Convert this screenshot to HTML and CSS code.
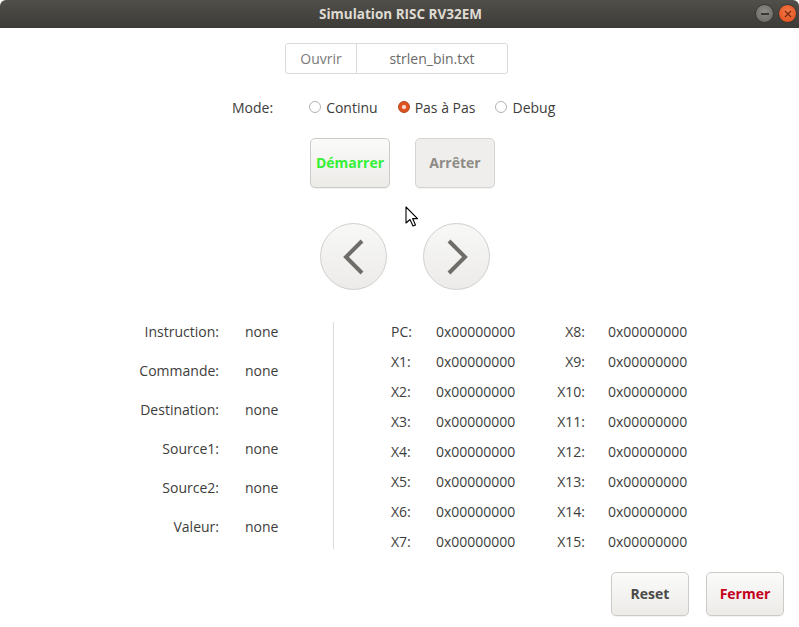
FILE: index.html
```html
<!DOCTYPE html>
<html lang="fr">
<head>
<meta charset="utf-8">
<title>Simulation RISC RV32EM</title>
<link rel="stylesheet" href="styles.css">
</head>
<body>
<div class="window">
  <div class="titlebar">
    <span class="title">Simulation RISC RV32EM</span>
    <div class="controls">
      <span class="ctl min"><span class="dash"></span></span>
      <span class="ctl close">
        <svg width="8" height="8" viewBox="0 0 8 8"><path d="M1 1L7 7M7 1L1 7" stroke="#7a2a10" stroke-width="1.4"/></svg>
      </span>
    </div>
  </div>

  <div class="content">
    <div class="row file-row">
      <div class="chooser">
        <span class="open">Ouvrir</span>
        <span class="fname">strlen_bin.txt</span>
      </div>
    </div>

    <div class="row mode-row">
      <span class="mode-label">Mode:</span>
      <label class="radio"><span class="dot"></span>Continu</label>
      <label class="radio"><span class="dot on"></span>Pas à Pas</label>
      <label class="radio"><span class="dot"></span>Debug</label>
    </div>

    <div class="row action-row">
      <button class="btn start">Démarrer</button>
      <button class="btn stop">Arrêter</button>
    </div>

    <div class="row nav-row">
      <button class="circ">
        <svg width="24" height="36" viewBox="0 0 24 36"><path d="M20 2L4 18L20 34" fill="none" stroke="#6f6d6a" stroke-width="4" stroke-linejoin="miter"/></svg>
      </button>
      <button class="circ">
        <svg width="24" height="36" viewBox="0 0 24 36"><path d="M4 2L20 18L4 34" fill="none" stroke="#6f6d6a" stroke-width="4" stroke-linejoin="miter"/></svg>
      </button>
    </div>

    <div class="info">
      <div class="fields">
        <div class="field"><span class="flabel">Instruction:</span><span class="fval">none</span></div>
        <div class="field"><span class="flabel">Commande:</span><span class="fval">none</span></div>
        <div class="field"><span class="flabel">Destination:</span><span class="fval">none</span></div>
        <div class="field"><span class="flabel">Source1:</span><span class="fval">none</span></div>
        <div class="field"><span class="flabel">Source2:</span><span class="fval">none</span></div>
        <div class="field"><span class="flabel">Valeur:</span><span class="fval">none</span></div>
      </div>
      <div class="sep"></div>
      <div class="regs">
        <span class="r1">PC:</span><span class="v1">0x00000000</span><span class="r2">X8:</span><span class="v2">0x00000000</span>
        <span class="r1">X1:</span><span class="v1">0x00000000</span><span class="r2">X9:</span><span class="v2">0x00000000</span>
        <span class="r1">X2:</span><span class="v1">0x00000000</span><span class="r2">X10:</span><span class="v2">0x00000000</span>
        <span class="r1">X3:</span><span class="v1">0x00000000</span><span class="r2">X11:</span><span class="v2">0x00000000</span>
        <span class="r1">X4:</span><span class="v1">0x00000000</span><span class="r2">X12:</span><span class="v2">0x00000000</span>
        <span class="r1">X5:</span><span class="v1">0x00000000</span><span class="r2">X13:</span><span class="v2">0x00000000</span>
        <span class="r1">X6:</span><span class="v1">0x00000000</span><span class="r2">X14:</span><span class="v2">0x00000000</span>
        <span class="r1">X7:</span><span class="v1">0x00000000</span><span class="r2">X15:</span><span class="v2">0x00000000</span>
      </div>
    </div>

    <div class="row bottom-row">
      <button class="btn small reset">Reset</button>
      <button class="btn small quit">Fermer</button>
    </div>
  </div>

  <svg class="cursor" width="14" height="22" viewBox="0 0 14 22"><path d="M1 1L1 17L5 13.5L8 20L10.5 19L7.6 12.6L12.5 12.6Z" fill="#fff" stroke="#000" stroke-width="1.1" stroke-linejoin="round"/></svg>
</div>
</body>
</html>
```

FILE: styles.css
```css
* { box-sizing: border-box; }
html, body { margin: 0; padding: 0; }
body {
  width: 799px;
  height: 627px;
  overflow: hidden;
  background: #ffffff;
  font-family: "Open Sans", "Noto Sans", sans-serif;
  font-size: 14px;
  color: #3d3d3b;
}
.window { position: relative; width: 799px; height: 627px; background: #ffffff; }

.titlebar {
  height: 28px;
  background: linear-gradient(#504f4a, #3c3b37);
  border-radius: 6px 6px 0 0;
  display: flex;
  align-items: center;
  justify-content: center;
  position: relative;
}
.title {
  color: #dfdbd2;
  font-weight: 700;
  font-size: 13.5px;
  padding-left: 2px;
}
.controls {
  position: absolute;
  right: 2px;
  top: 4px;
  display: flex;
  gap: 4px;
}
.ctl {
  width: 19px; height: 19px; border-radius: 50%;
  display: flex; align-items: center; justify-content: center;
}
.ctl.min { background: radial-gradient(circle at 50% 40%, #8e8d88, #65645f); border: 1px solid #3a3935; }
.ctl.min .dash { width: 8px; height: 2px; background: #3b3a36; }
.ctl.close { background: radial-gradient(circle at 50% 40%, #f47a4a, #dd4a16); border: 1px solid #3a3935; }

.content { display: flex; flex-direction: column; }
.row { display: flex; align-items: center; }

.file-row { padding: 15px 0 0 285px; }
.chooser {
  display: flex;
  height: 31px;
  border: 1px solid #dcdad6;
  border-radius: 3px;
  background: #fff;
}
.chooser span { display: flex; align-items: center; justify-content: center; color: #7a7a78; }
.chooser .open { width: 71px; border-right: 1px solid #dcdad6; }
.chooser .fname { width: 150px; color: #6a6a68; }

.mode-row { padding: 21px 0 0 232px; height: 45px; }
.mode-label { margin-right: 36px; }
.radio { display: flex; align-items: center; margin-right: 20px; }
.radio .dot {
  width: 12px; height: 12px; border-radius: 50%;
  border: 1px solid #b5b3af; background: #fff;
  margin-right: 5px;
}
.radio .dot.on {
  border-color: #b2431a;
  background: radial-gradient(circle, #f6d8cc 0 1.8px, #e2541f 2.4px);
}

.action-row { padding: 19px 0 0 310px; gap: 25px; }
.btn {
  font-family: inherit;
  font-weight: 700;
  font-size: 14px;
  border: 1px solid #cdcbc7;
  border-radius: 5px;
  background: linear-gradient(#fbfbfa, #ecebe8);
  box-shadow: 0 1px 0 rgba(0,0,0,0.05);
  padding: 0 0 2px 0;
}
.action-row .btn { width: 80px; height: 50px; }
.btn.start { color: #35f035; }
.btn.stop { color: #8e8b86; background: #efeeec; border-color: #d6d4d0; }

.nav-row { padding: 35px 0 0 320px; gap: 36px; }
.circ {
  width: 67px; height: 67px; border-radius: 50%;
  border: 1.5px solid #d2d0cc;
  background: linear-gradient(#f8f8f7, #ecebe9);
  display: flex; align-items: center; justify-content: center;
  padding: 0;
}

.info { display: flex; padding: 26px 0 0 0; height: 276px; }
.fields { width: 333px; display: flex; flex-direction: column; gap: 9px; }
.field { display: flex; height: 30px; align-items: center; }
.flabel { width: 219px; text-align: right; }
.fval { margin-left: 26px; }
.sep { width: 1px; height: 227px; margin-top: 6px; background: #dedcd8; }
.regs {
  margin-left: 57px;
  display: grid;
  grid-template-columns: 45px 99px 50px 110px;
  grid-auto-rows: 30px;
  align-items: center;
}
.regs .r2 { text-align: right; }
.regs .v2 { padding-left: 23px; }
.regs .v1, .regs .v2 { white-space: nowrap; }

.bottom-row { justify-content: flex-end; padding: 6px 15px 0 0; gap: 17px; }
.btn.small { width: 78px; height: 44px; }
.btn.reset { color: #4a4a48; }
.btn.quit { color: #c4001c; }

.cursor { position: absolute; left: 405px; top: 206px; }
```
